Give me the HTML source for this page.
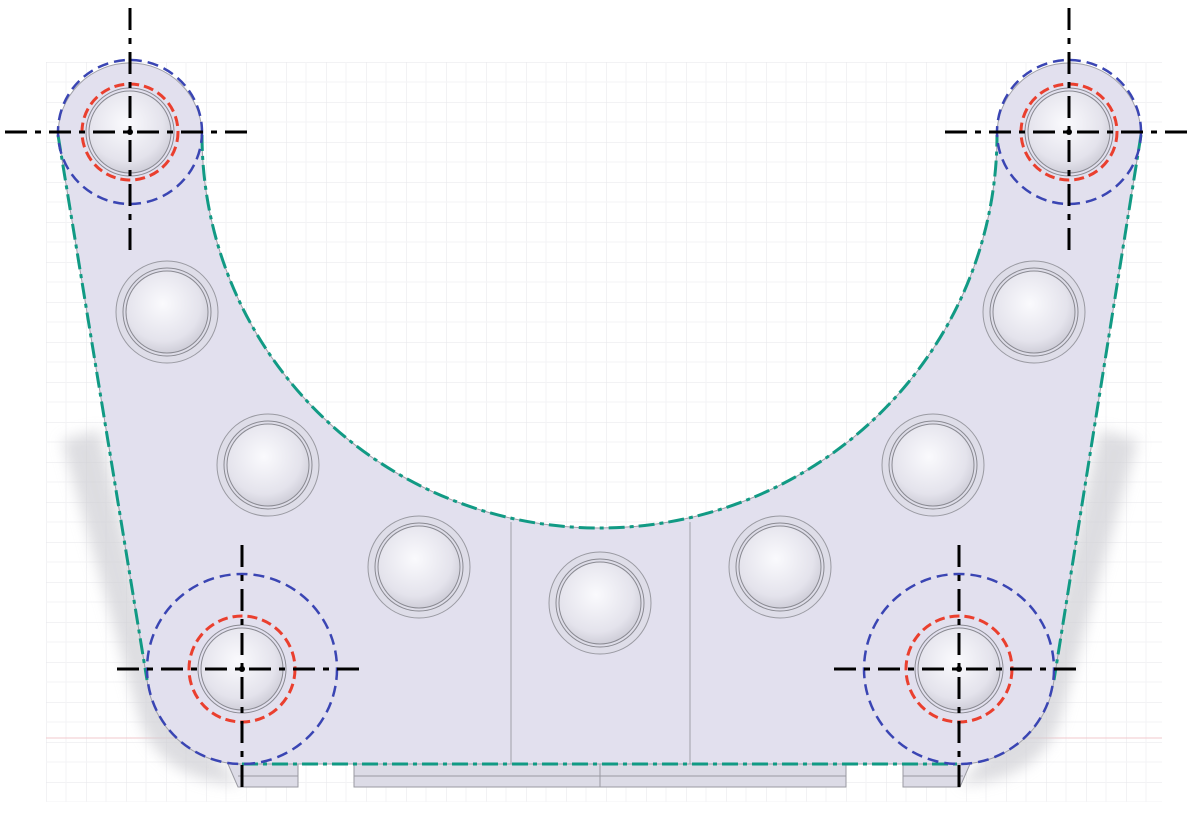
<!DOCTYPE html>
<html><head><meta charset="utf-8"><style>html,body{margin:0;padding:0;background:#fff}svg{display:block}</style></head>
<body>
<svg width="1200" height="815" viewBox="0 0 1200 815" xmlns="http://www.w3.org/2000/svg">
<defs>
<pattern id="g" width="40" height="40" patternUnits="userSpaceOnUse" x="46" y="22">
<path d="M0 0H40M0 0V40" stroke="#e6e6ea" stroke-width="1" fill="none"/>
<path d="M0 20H40M20 0V40" stroke="#f3f3f5" stroke-width="1" fill="none"/>
</pattern>
<radialGradient id="s" cx="0.45" cy="0.4" r="0.65">
<stop offset="0" stop-color="#fafafd"/><stop offset="0.7" stop-color="#e4e3ec"/><stop offset="1" stop-color="#c9c8d3"/>
</radialGradient>
<filter id="b" x="-30%" y="-20%" width="160%" height="140%"><feGaussianBlur stdDeviation="7"/></filter>
<g id="bump">
<circle r="51" fill="#dedde8" stroke="#9a9aa2" stroke-width="1"/>
<circle r="44" fill="none" stroke="#8a8a92" stroke-width="1"/>
<circle r="41" fill="url(#s)" stroke="#8a8a92" stroke-width="1"/>
</g>
<g id="hole">
<circle r="44" fill="none" stroke="#8a8a92" stroke-width="1"/>
<circle r="41" fill="url(#s)" stroke="#8a8a92" stroke-width="1"/>
</g>
</defs>
<rect x="46" y="62" width="1116" height="740" fill="url(#g)"/>
<line x1="46" y1="738" x2="1162" y2="738" stroke="#f2c8cc" stroke-width="1"/>
<!-- shadow -->
<g fill="#cfcfd4" opacity="0.7" filter="url(#b)">
<path d="M62 440 L100 430 L160 690 L240 785 Q160 780 140 720 Z"/>
<path d="M1138 440 L1100 430 L1040 690 L960 785 Q1040 780 1060 720 Z"/>
</g>
<!-- tabs -->
<g fill="#dcdbe6" stroke="#9a9aa2" stroke-width="1">
<path d="M228 764 L298 764 L298 787 L238 787 Z"/>
<rect x="354" y="764" width="492" height="23"/>
<path d="M903 764 L970 764 L960 787 L903 787 Z"/>
<line x1="238" y1="776" x2="298" y2="776"/><line x1="354" y1="776" x2="846" y2="776"/><line x1="903" y1="776" x2="963" y2="776"/>
<line x1="600" y1="764" x2="600" y2="787"/>
</g>
<!-- body -->
<path d="M58 135 A72 72 0 0 1 202 135 A397.5 393 0 0 0 997 135 A72 72 0 0 1 1141 135 L1054 680 A95 95 0 0 1 959 764 L242 764 A95 95 0 0 1 147 680 Z" fill="#e2e0ee" stroke="#a0a0a8" stroke-width="1"/>
<line x1="511" y1="522" x2="511" y2="764" stroke="#a0a0a8"/>
<line x1="690" y1="522" x2="690" y2="764" stroke="#a0a0a8"/>
<use href="#bump" x="167" y="312"/><use href="#bump" x="268" y="465"/><use href="#bump" x="419" y="567"/>
<use href="#bump" x="600" y="603"/><use href="#bump" x="780" y="567"/><use href="#bump" x="933" y="465"/><use href="#bump" x="1034" y="312"/>
<use href="#hole" x="130" y="132"/><use href="#hole" x="1069" y="132"/><use href="#hole" x="242" y="669"/><use href="#hole" x="959" y="669"/>
<!-- green outline -->
<g fill="none" stroke="#119a84" stroke-width="3" stroke-dasharray="16 5 4 5">
<path d="M202 135 A397.5 393 0 0 0 997 135"/>
<path d="M58 135 L147 680"/><path d="M1141 135 L1054 680"/>
<path d="M242 764 L959 764"/>
</g>
<!-- blue -->
<g fill="none" stroke="#3a45b3" stroke-width="2.5" stroke-dasharray="11 6">
<circle cx="130" cy="132" r="72"/><circle cx="1069" cy="132" r="72"/>
<circle cx="242" cy="669" r="95"/><circle cx="959" cy="669" r="95"/>
</g>
<!-- red -->
<g fill="none" stroke="#ea3f2e" stroke-width="3" stroke-dasharray="10 5">
<circle cx="130" cy="132" r="48"/><circle cx="1069" cy="132" r="48"/>
<circle cx="242" cy="669" r="53"/><circle cx="959" cy="669" r="53"/>
</g>
<!-- center lines -->
<g stroke="#000" stroke-width="3" stroke-dasharray="22 8 6 8" fill="none">
<path d="M130 8V255M5 132H255"/>
<path d="M1069 8V255M945 132H1195"/>
<path d="M242 545V795M117 669H367"/>
<path d="M959 545V795M834 669H1084"/>
</g>
<g fill="#000"><circle cx="130" cy="132" r="3"/><circle cx="1069" cy="132" r="3"/><circle cx="242" cy="669" r="3"/><circle cx="959" cy="669" r="3"/></g>
</svg>
</body></html>
